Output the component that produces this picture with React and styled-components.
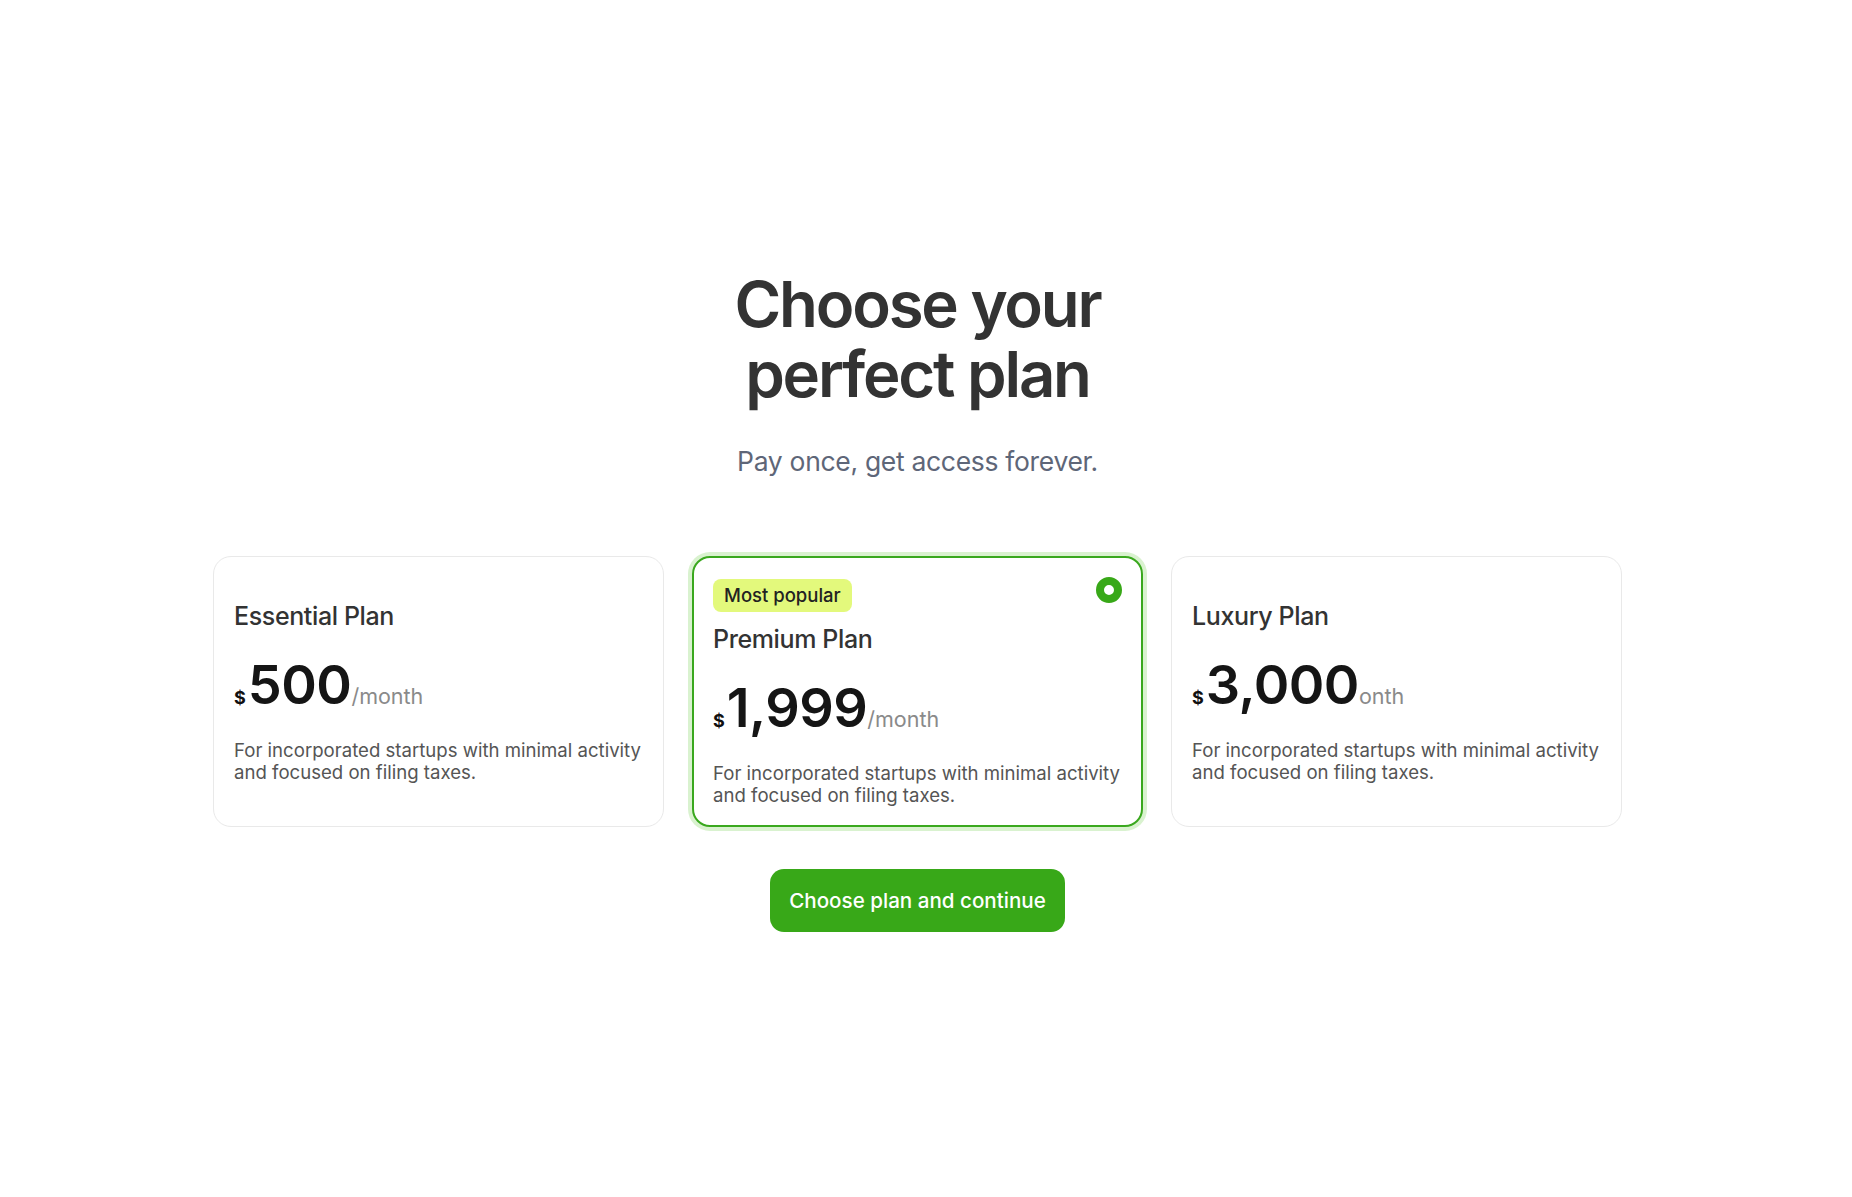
import styled, { createGlobalStyle } from "styled-components";

const GlobalStyle = createGlobalStyle`
  html, body {
    margin: 0;
    padding: 0;
    background: #ffffff;
  }
  body {
    font-family: Inter, "Noto Sans", "Liberation Sans", sans-serif;
    color: #333333;
  }
`;

const plans = [
  {
    id: "essential",
    name: "Essential Plan",
    price: "500",
    period: "/month",
    description:
      "For incorporated startups with minimal activity and focused on filing taxes."
  },
  {
    id: "premium",
    name: "Premium Plan",
    price: "1,999",
    period: "/month",
    popular: true,
    description:
      "For incorporated startups with minimal activity and focused on filing taxes."
  },
  {
    id: "luxury",
    name: "Luxury Plan",
    price: "3,000",
    period: "onth",
    description:
      "For incorporated startups with minimal activity and focused on filing taxes."
  }
];

const Page = styled.main`
  display: flex;
  flex-direction: column;
  align-items: center;
  min-height: 100vh;
  box-sizing: border-box;
  padding: 269px 17px 0 0;
`;

const Title = styled.h1`
  margin: 0;
  font-size: 63.5px;
  font-weight: 600;
  line-height: 1.11;
  letter-spacing: -0.035em;
  text-align: center;
  color: #333333;
`;

const Subtitle = styled.p`
  margin: 36px 0 0;
  font-size: 26.5px;
  line-height: 1.2;
  font-weight: 400;
  letter-spacing: -0.012em;
  color: #5e6678;
`;

const Grid = styled.section`
  display: grid;
  grid-template-columns: repeat(3, 451px);
  gap: 28px;
  margin-top: 78px;
`;

const Card = styled.article`
  position: relative;
  display: flex;
  flex-direction: column;
  justify-content: center;
  box-sizing: border-box;
  min-height: 269px;
  padding: ${p => (p.$selected ? "21px 19px 18px" : "22px 20px 19px")};
  border: ${p => (p.$selected ? "2px solid #3aa81e" : "1px solid #e9e9e9")};
  border-radius: 18px;
  background: #ffffff;
  box-shadow: ${p => (p.$selected ? "0 0 0 4px #d9f2cf" : "none")};
  cursor: pointer;
`;

const Badge = styled.span`
  align-self: flex-start;
  display: inline-flex;
  align-items: center;
  height: 33px;
  padding: 0 11px;
  margin-bottom: 13px;
  border-radius: 8px;
  background: #e3f97c;
  color: #222222;
  font-size: 18.5px;
  font-weight: 500;
`;

const Radio = styled.span`
  position: absolute;
  top: 19px;
  right: 19px;
  box-sizing: border-box;
  width: 26px;
  height: 26px;
  border-radius: 50%;
  border: 8px solid #38a818;
  background: #ffffff;
`;

const PlanName = styled.h2`
  margin: 0;
  font-size: 25px;
  font-weight: 500;
  line-height: 1.15;
  letter-spacing: -0.015em;
  color: #333333;
`;

const PriceRow = styled.div`
  display: flex;
  align-items: baseline;
  margin-top: 28px;
  line-height: 52px;
  height: 52px;
`;

const Currency = styled.span`
  font-size: 18px;
  font-weight: 700;
  color: #111111;
  margin-right: 2px;
`;

const Amount = styled.span`
  font-size: 54px;
  font-weight: 600;
  letter-spacing: -0.01em;
  color: #151515;
`;

const Period = styled.span`
  font-size: 21.5px;
  font-weight: 400;
  color: #8a8a8a;
`;

const Description = styled.p`
  margin: 28px 0 0;
  font-size: 18.6px;
  line-height: 22.5px;
  color: #555555;
`;

const ContinueButton = styled.button`
  margin-top: 42px;
  height: 63px;
  padding: 0 19px;
  border: none;
  border-radius: 14px;
  background: #38a818;
  color: #ffffff;
  font-family: inherit;
  font-size: 20.6px;
  font-weight: 500;
  cursor: pointer;
`;

const PlanCard = ({ plan, selected }) => (
  <Card $selected={selected}>
    {plan.popular && <Badge>Most popular</Badge>}
    {selected && <Radio />}
    <PlanName>{plan.name}</PlanName>
    <PriceRow>
      <Currency>$</Currency>
      <Amount>{plan.price}</Amount>
      <Period>{plan.period}</Period>
    </PriceRow>
    <Description>{plan.description}</Description>
  </Card>
);

const App = () => {
  const selected = "premium";
  return (
    <>
      <GlobalStyle />
      <Page>
        <Title>
          Choose your
          <br />
          perfect plan
        </Title>
        <Subtitle>Pay once, get access forever.</Subtitle>
        <Grid>
          {plans.map(plan => (
            <PlanCard key={plan.id} plan={plan} selected={plan.id === selected} />
          ))}
        </Grid>
        <ContinueButton>Choose plan and continue</ContinueButton>
      </Page>
    </>
  );
};

export default App;
